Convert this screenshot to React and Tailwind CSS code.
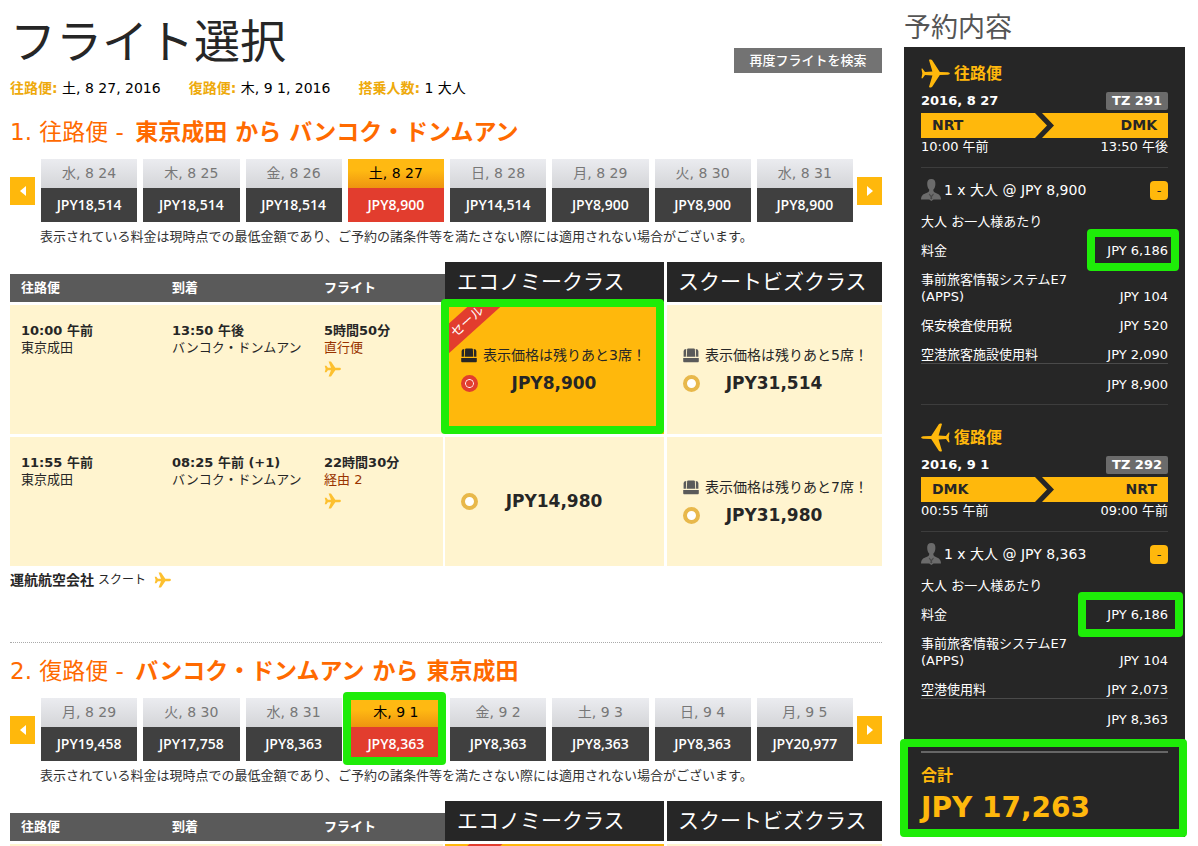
import { useState } from 'react';
import { clsx } from 'clsx';

const NOTE = '表示されている料金は現時点での最低金額であり、ご予約の諸条件等を満たさない際には適用されない場合がございます。';

const outboundDays = [
  { date: '水, 8 24', price: 'JPY18,514' },
  { date: '木, 8 25', price: 'JPY18,514' },
  { date: '金, 8 26', price: 'JPY18,514' },
  { date: '土, 8 27', price: 'JPY8,900' },
  { date: '日, 8 28', price: 'JPY14,514' },
  { date: '月, 8 29', price: 'JPY8,900' },
  { date: '火, 8 30', price: 'JPY8,900' },
  { date: '水, 8 31', price: 'JPY8,900' },
];

const returnDays = [
  { date: '月, 8 29', price: 'JPY19,458' },
  { date: '火, 8 30', price: 'JPY17,758' },
  { date: '水, 8 31', price: 'JPY8,363' },
  { date: '木, 9 1', price: 'JPY8,363' },
  { date: '金, 9 2', price: 'JPY8,363' },
  { date: '土, 9 3', price: 'JPY8,363' },
  { date: '日, 9 4', price: 'JPY8,363' },
  { date: '月, 9 5', price: 'JPY20,977' },
];

const outboundFlights = [
  {
    dep: '10:00 午前', from: '東京成田',
    arr: '13:50 午後', to: 'バンコク・ドンムアン',
    duration: '5時間50分', stops: '直行便',
    economy: { price: 'JPY8,900', seats: 3, sale: true, marked: true },
    biz: { price: 'JPY31,514', seats: 5 },
  },
  {
    dep: '11:55 午前', from: '東京成田',
    arr: '08:25 午前 (+1)', to: 'バンコク・ドンムアン',
    duration: '22時間30分', stops: '経由 2',
    economy: { price: 'JPY14,980' },
    biz: { price: 'JPY31,980', seats: 7 },
  },
];

const returnFlights = [
  {
    dep: '00:55 午前', from: 'バンコク・ドンムアン',
    arr: '09:00 午前', to: '東京成田',
    duration: '6時間05分', stops: '直行便',
    economy: { price: 'JPY8,363', seats: 3, sale: true },
    biz: { price: 'JPY31,514', seats: 5 },
  },
];

const summary = [
  {
    title: '往路便', date: '2016, 8 27', flight: 'TZ 291',
    from: 'NRT', to: 'DMK', dep: '10:00 午前', arr: '13:50 午後',
    pax: '1 x 大人 @ JPY 8,900', total: 'JPY 8,900',
    mark: '-top-[13px] -right-[11px] h-[42px] w-[92px]',
    fees: [
      ['料金', 'JPY 6,186'],
      ['事前旅客情報システムE7 (APPS)', 'JPY 104'],
      ['保安検査使用税', 'JPY 520'],
      ['空港旅客施設使用料', 'JPY 2,090'],
    ],
  },
  {
    title: '復路便', date: '2016, 9 1', flight: 'TZ 292', back: true,
    from: 'DMK', to: 'NRT', dep: '00:55 午前', arr: '09:00 午前',
    pax: '1 x 大人 @ JPY 8,363', total: 'JPY 8,363',
    mark: '-top-[14px] -right-[15px] h-[45px] w-[105px]',
    fees: [
      ['料金', 'JPY 6,186'],
      ['事前旅客情報システムE7 (APPS)', 'JPY 104'],
      ['空港使用料', 'JPY 2,073'],
    ],
  },
];

function SmallPlane({ className }) {
  return (
    <svg viewBox="0 0 17 16" className={clsx('h-4 w-[17px] fill-[#fdc02f]', className)} aria-hidden="true">
      <path d="M4.6.6H7l4.3 6.2h4.2c.8 0 1.4.5 1.4 1.2s-.6 1.2-1.4 1.2h-4.2L7 15.4H4.6L7 9.2H3.9l-1.5 2.1H.7L1.6 8 .7 4.7h1.7l1.5 2.1H7z" />
    </svg>
  );
}

function BigPlane({ back }) {
  return (
    <svg viewBox="0 0 29 29" className={clsx('h-[29px] w-[29px] fill-[#ffb80c]', back && '-scale-x-100')} aria-hidden="true">
      <path d="M8 1c0-.6 2.600-.8 3.200.2L18.800 13l8 .3c1.300.1 2 .6 2 1.200s-.7 1.100-2 1.200l-8 .3-7.600 11.800c-.6 1-3.200.8-3.200.2l3.400-11.600-7.400-.5-2.200 3.200c-.3.4-1.300.4-1.300 0l.8-4.600-.8-4.600c0-.4 1-.4 1.300 0L4 13.100l7.400-.5z" />
    </svg>
  );
}

function SeatIcon({ dark }) {
  return (
    <svg viewBox="0 0 16 15" className={clsx('h-[15px] w-4', dark ? 'fill-[#262626]' : 'fill-[#5a5a5a]')} aria-hidden="true">
      <path d="M4.200 1.200Q4.300.4 5 .4h6q.7 0 .8.8L12.300 8.800H3.700z" />
      <path d="M.6 8.800V3Q.8 1.200 3.200 1L2.900 8.800zM15.400 8.800V3Q15.200 1.200 12.800 1l.3 7.800z" />
      <path d="M.2 10h15.600v3c0 .8-.4 1.300-1.200 1.300H1.400C.6 14.300.2 13.800.2 13z" />
    </svg>
  );
}

function PersonIcon() {
  return (
    <svg viewBox="0 0 20 22" className="h-[22px] w-5" aria-hidden="true">
      <path
        className="fill-[#6b6b6b]"
        d="M10.300 0c2.900 0 4.300 2 4.100 4.900-.1 2.900-1 4.500-2 5.700-.2 1.500.2 2.300 1.500 3 2.600 1.300 6.100 2 6.100 6.800h-7.500L10.400 22l-2.200-1.600H0c0-4.800 3.500-5.500 6.500-6.800 1.500-.7 1.900-1.500 1.700-3-1-1.200-1.900-2.800-2-5.700C6 2 7.400 0 10.300 0z"
      />
      <path className="fill-[#262626]" d="M8.300 14.600l2 2.200 2-2.200.5.8-1.900 2.600.5 1.600-1.100 1-1.100-1 .5-1.600-1.900-2.600z" opacity=".5" />
    </svg>
  );
}

function Arrow({ dir }) {
  return (
    <button type="button" aria-label={dir === 'prev' ? '前へ' : '次へ'} className="flex h-7 w-[25px] shrink-0 items-center justify-center bg-[#ffb80c]">
      <svg viewBox="0 0 6 10" className={clsx('h-[10px] w-[6px] fill-white', dir === 'next' && '-scale-x-100')} aria-hidden="true">
        <path d="M6 0v10L0 5z" />
      </svg>
    </button>
  );
}

function DayPicker({ days, marked }) {
  const [selected, setSelected] = useState(3);

  return (
    <>
      <div className="mt-[11px] flex items-center">
        <Arrow dir="prev" />
        <div className="mr-1 ml-[6px] flex flex-1 gap-[6px]">
          {days.map((d, i) => (
            <button key={d.date} type="button" onClick={() => setSelected(i)} className="relative flex-1">
              <span
                className={clsx(
                  'block h-[29px] bg-linear-to-b text-[14px] leading-[29px]',
                  i === selected ? 'from-[#ffb912] from-40% to-[#ee9410] text-black' : 'from-[#ebecf0] to-[#d4d5d8] text-[#777]'
                )}
              >
                {d.date}
              </span>
              <span
                className={clsx(
                  "block h-[34px] font-['Open_Sans','Noto_Sans_CJK_JP',sans-serif] text-[14px] leading-[34px] font-semibold text-white",
                  i === selected ? 'bg-[#e23d2e]' : 'bg-[#404040]'
                )}
              >
                {d.price}
              </span>
              {marked === i && <span className="absolute -top-[6px] -right-[2px] -bottom-1 -left-[5px] rounded-[4px] border-8 border-[#1eec08]" />}
            </button>
          ))}
        </div>
        <Arrow dir="next" />
      </div>
      <p className="mt-[5px] pl-[30px] text-[13px] leading-5 whitespace-nowrap text-[#333]">{NOTE}</p>
    </>
  );
}

function Fare({ fare, name, checked, onPick }) {
  return (
    <>
      {fare.sale && (
        <div className="absolute inset-0 overflow-hidden">
          <span className="absolute top-[7px] -left-[26px] w-[94px] -rotate-[42deg] bg-[#e23d2e] pl-1 text-center text-[13px] leading-[22px] text-white">セール</span>
        </div>
      )}
      <label className={clsx('relative block cursor-pointer pl-4', fare.seats && 'pt-1')}>
        {fare.seats && (
          <span className="mb-1 flex h-5 items-center gap-[6px] text-[14px] whitespace-nowrap">
            <SeatIcon dark={fare.sale} />
            <span>表示価格は残りあと{fare.seats}席！</span>
          </span>
        )}
        <span className="flex h-7 items-center">
          <input
            type="radio"
            name={name}
            checked={checked}
            onChange={onPick}
            className="h-[17px] w-[17px] shrink-0 appearance-none rounded-full border-4 border-[#e8b84b] bg-white checked:border-[#e23d2e] checked:bg-[#e23d2e] checked:shadow-[inset_0_0_0_1px_#fff]"
          />
          <span className="flex-1 pr-[34px] text-center text-[17px] font-bold">{fare.price}</span>
        </span>
      </label>
      {fare.marked && <span className="pointer-events-none absolute -top-[6px] right-0 bottom-0 -left-1 rounded-[4px] border-8 border-[#1eec08]" />}
    </>
  );
}

function FlightTable({ flights, name }) {
  const [picked, setPicked] = useState('0-economy');
  const td = 'border-t-[3px] border-white bg-[#fff4cf] p-0';

  return (
    <table className="mt-[15px] w-full table-fixed border-separate border-spacing-0 text-left text-[13px] leading-[17px] text-[#262626]">
      <colgroup>
        <col className="w-[151px]" />
        <col className="w-[152px]" />
        <col className="w-[132px]" />
        <col className="w-[222px]" />
        <col />
      </colgroup>
      <thead>
        <tr className="text-white">
          {['往路便', '到着', 'フライト'].map((h) => (
            <th key={h} className="p-0 align-bottom font-bold">
              <div className="h-7 bg-[#5a5a5a] pl-[11px] leading-7">{h}</div>
            </th>
          ))}
          <th className="h-10 border-r-[3px] border-white bg-[#262626] py-0 pr-0 pl-3 text-[21px] font-normal">エコノミークラス</th>
          <th className="h-10 bg-[#262626] py-0 pr-0 pl-[11px] text-[21px] font-normal">スクートビズクラス</th>
        </tr>
      </thead>
      <tbody>
        {flights.map((f, i) => (
          <tr key={f.dep} className="h-[132px]">
            <td className={clsx(td, 'pt-[17px] pl-[11px] align-top')}>
              <div className="font-bold">{f.dep}</div>
              <div>{f.from}</div>
            </td>
            <td className={clsx(td, 'pt-[17px] pl-[11px] align-top whitespace-nowrap')}>
              <div className="font-bold">{f.arr}</div>
              <div>{f.to}</div>
            </td>
            <td className={clsx(td, 'border-r-2 pt-[17px] pl-[11px] align-top')}>
              <div className="font-bold">{f.duration}</div>
              <a href="#stops" className="block text-[#993300]">{f.stops}</a>
              <SmallPlane className="mt-[5px]" />
            </td>
            <td className={clsx('relative border-t-[3px] border-r-[3px] border-white p-0', picked === `${i}-economy` ? 'bg-[#ffb80c]' : 'bg-[#fff4cf]')}>
              <Fare fare={f.economy} name={name} checked={picked === `${i}-economy`} onPick={() => setPicked(`${i}-economy`)} />
            </td>
            <td className={clsx('relative border-t-[3px] border-white p-0', picked === `${i}-biz` ? 'bg-[#ffb80c]' : 'bg-[#fff4cf]')}>
              <Fare fare={f.biz} name={name} checked={picked === `${i}-biz`} onPick={() => setPicked(`${i}-biz`)} />
            </td>
          </tr>
        ))}
      </tbody>
    </table>
  );
}

function Leg({ leg }) {
  return (
    <section>
      <h3 className="flex items-center gap-1 text-[16px] font-bold text-[#ffb80c]">
        <BigPlane back={leg.back} />
        {leg.title}
      </h3>
      <div className="mt-1 flex h-[18px] items-center justify-between text-[13px] font-bold">
        <span>{leg.date}</span>
        <span className="rounded-[2px] bg-[#6b6b6b] px-[6px] leading-[18px]">{leg.flight}</span>
      </div>
      <div className="mt-[3px] flex h-[25px] items-center bg-[#ffb80c] px-[11px] text-[14px] font-bold text-[#262626]">
        <span className="flex-1">{leg.from}</span>
        <svg viewBox="0 0 20 25" className="h-[25px] w-5 fill-[#262626]" aria-hidden="true">
          <path d="M0 0h7l12 12.500L7 25H0l12-12.500z" />
        </svg>
        <span className="flex-1 text-right">{leg.to}</span>
      </div>
      <div className="flex justify-between text-[13px] leading-[18px]">
        <span>{leg.dep}</span>
        <span>{leg.arr}</span>
      </div>
      <div className="mt-[11px] flex items-center border-t border-[#3d3d3d] pt-[11px]">
        <PersonIcon />
        <span className="ml-[3px] flex-1 text-[14px] leading-[22px]">{leg.pax}</span>
        <button type="button" aria-label="明細を閉じる" className="h-[19px] w-[18px] rounded-[4px] bg-[#ffb80c] text-[13px] leading-[15px] text-[#262626]">-</button>
      </div>
      <p className="mt-3 text-[13px] leading-[17px]">大人 お一人様あたり</p>
      <dl className="text-[13px] leading-[17px]">
        {leg.fees.map(([label, amount], i) => (
          <div key={label} className="mt-3 flex items-end justify-between">
            <dt className="w-[150px]">{label}</dt>
            <dd className="relative">
              {amount}
              {i === 0 && <span className={clsx('pointer-events-none absolute rounded-[4px] border-8 border-[#1eec08]', leg.mark)} />}
            </dd>
          </div>
        ))}
      </dl>
      <p className="border-t border-[#4a4a4a] pt-3 text-right text-[13px] leading-[17px]">{leg.total}</p>
    </section>
  );
}

export default function App() {
  return (
    <div className="flex items-start gap-[22px] bg-white pr-[13px] pl-[10px] font-['DejaVu_Sans','Noto_Sans_CJK_JP',sans-serif] text-[#262626]">
      <main className="min-w-0 flex-1">
        <header className="flex items-end justify-between pt-4">
          <h1 className="h-[57px] text-[46px] leading-[52px]">フライト選択</h1>
          <button type="button" className="h-[25px] w-[148px] bg-[#737373] text-[13px] font-medium text-white">再度フライトを検索</button>
        </header>
        <div className="mt-[5px] flex gap-7 text-[14px] leading-5 text-black">
          <span><b className="text-[#eeaa0c]">往路便:</b> 土, 8 27, 2016</span>
          <span><b className="text-[#eeaa0c]">復路便:</b> 木, 9 1, 2016</span>
          <span><b className="text-[#eeaa0c]">搭乗人数:</b> 1 大人</span>
        </div>

        <section>
          <h2 className="mt-[18px] text-[23px] leading-8 text-[#ff6a00]">1. 往路便 - <b className="ml-1">東京成田 から バンコク・ドンムアン</b></h2>
          <DayPicker days={outboundDays} />
          <FlightTable flights={outboundFlights} name="outbound" />
          <p className="mt-1 flex h-5 items-center text-[12px]">
            <b className="mr-1 text-[14px]">運航航空会社</b>
            スクート
            <SmallPlane className="ml-2" />
          </p>
        </section>

        <section className="mt-[52px] border-t border-dotted border-[#aaa]">
          <h2 className="mt-3 text-[23px] leading-8 text-[#ff6a00]">2. 復路便 - <b className="ml-1">バンコク・ドンムアン から 東京成田</b></h2>
          <DayPicker days={returnDays} marked={3} />
          <FlightTable flights={returnFlights} name="return" />
        </section>
      </main>

      <aside className="w-[281px] shrink-0">
        <h2 className="pt-2 text-[27px] leading-[39px] text-[#555]">予約内容</h2>
        <div className="relative bg-[#262626] px-[17px] pt-3 text-white">
          <Leg leg={summary[0]} />
          <hr className="mt-[11px] mb-[18px] border-[#3d3d3d]" />
          <Leg leg={summary[1]} />
          <div className="relative mt-[23px] h-[86px] border-t-2 border-[#666] pt-3 text-[#ffb80c]">
            <div className="text-[16px] leading-[22px] font-bold">合計</div>
            <div className="text-[28px] leading-[42px] font-bold">JPY 17,263</div>
            <span className="pointer-events-none absolute -top-[14px] -right-[19px] bottom-0 -left-[21px] rounded-[4px] border-8 border-[#1eec08]" />
          </div>
        </div>
      </aside>
    </div>
  );
}
